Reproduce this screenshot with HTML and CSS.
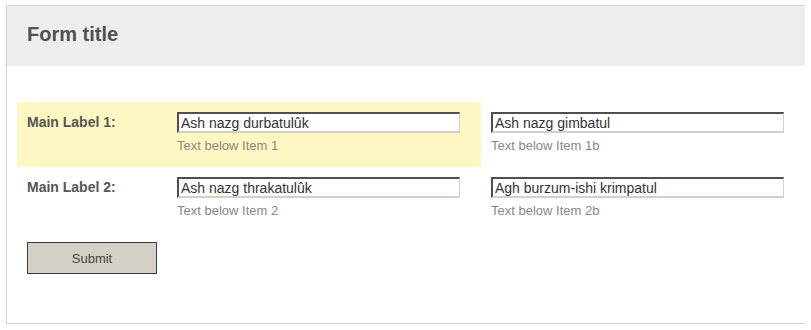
FILE: index.html
```html
<!DOCTYPE html>
<html lang="en">
<head>
    <meta charset="UTF-8">
    <meta name="viewport" content="width=device-width, initial-scale=1.0">
    <title>Form</title>
    <link rel="stylesheet" href="styles.css">
</head>
<body>
    <div class="card">
        <div class="card-header">
            <h1>Form title</h1>
        </div>
        <form class="card-body">
            <div class="row">
                <div class="group highlight">
                    <label class="label">Main Label 1:</label>
                    <div class="field">
                        <input type="text" value="Ash nazg durbatulûk">
                        <div class="help">Text below Item 1</div>
                    </div>
                </div>
                <div class="field field-b">
                    <input type="text" value="Ash nazg gimbatul">
                    <div class="help">Text below Item 1b</div>
                </div>
            </div>
            <div class="row">
                <div class="group">
                    <label class="label">Main Label 2:</label>
                    <div class="field">
                        <input type="text" value="Ash nazg thrakatulûk">
                        <div class="help">Text below Item 2</div>
                    </div>
                </div>
                <div class="field field-b">
                    <input type="text" value="Agh burzum-ishi krimpatul">
                    <div class="help">Text below Item 2b</div>
                </div>
            </div>
            <div class="actions">
                <button type="button" class="submit">Submit</button>
            </div>
        </form>
    </div>
</body>
</html>
```

FILE: styles.css
```css
body{
    margin: 5px 6px;
    font-family: "Liberation Sans", Arial, sans-serif;
    background: white;
}
.card{
    width: 800px;
    box-sizing: border-box;
    border: 1px solid #d2d2d2;
    box-shadow: 1px 1px 2px rgba(0,0,0,0.18);
    background: white;
}
.card-header{
    background-color: #ededed;
    height: 60px;
    box-sizing: border-box;
    padding: 16px 20px 0;
}
.card-header h1{
    margin: 0;
    font-size: 20px;
    line-height: 24px;
    color: #505050;
}
.card-body{
    padding: 36px 10px 49px;
    margin: 0;
}
.row{
    display: flex;
}
.group{
    display: flex;
    width: 464px;
    box-sizing: border-box;
    padding: 10px 21px 12px 10px;
}
.highlight{
    background-color: #fff7c1;
}
.label{
    width: 150px;
    font-size: 14px;
    font-weight: bold;
    line-height: 20px;
    color: #555;
}
.field{
    width: 283px;
}
.field-b{
    width: 313px;
    box-sizing: border-box;
    padding: 10px 10px 12px;
}
.field input{
    display: block;
    width: 100%;
    height: 21px;
    box-sizing: border-box;
    margin: 0;
    padding: 0 2px;
    border-style: solid;
    border-width: 2px 1px 2px 2px;
    border-color: #4e4e4e #d4d0c8 #d4d0c8 #4e4e4e;
    font-family: "Liberation Sans", Arial, sans-serif;
    font-size: 14px;
    color: #333;
    background: white;
}
.help{
    margin-top: 4px;
    font-size: 13px;
    line-height: 18px;
    color: #888;
}
.actions{
    padding: 10px 10px 0;
}
.submit{
    width: 130px;
    height: 32px;
    border: 1px solid #3a3a3a;
    background-color: #d4d0c8;
    font-family: "Liberation Sans", Arial, sans-serif;
    font-size: 13px;
    color: #444;
    padding: 0;
}
```
